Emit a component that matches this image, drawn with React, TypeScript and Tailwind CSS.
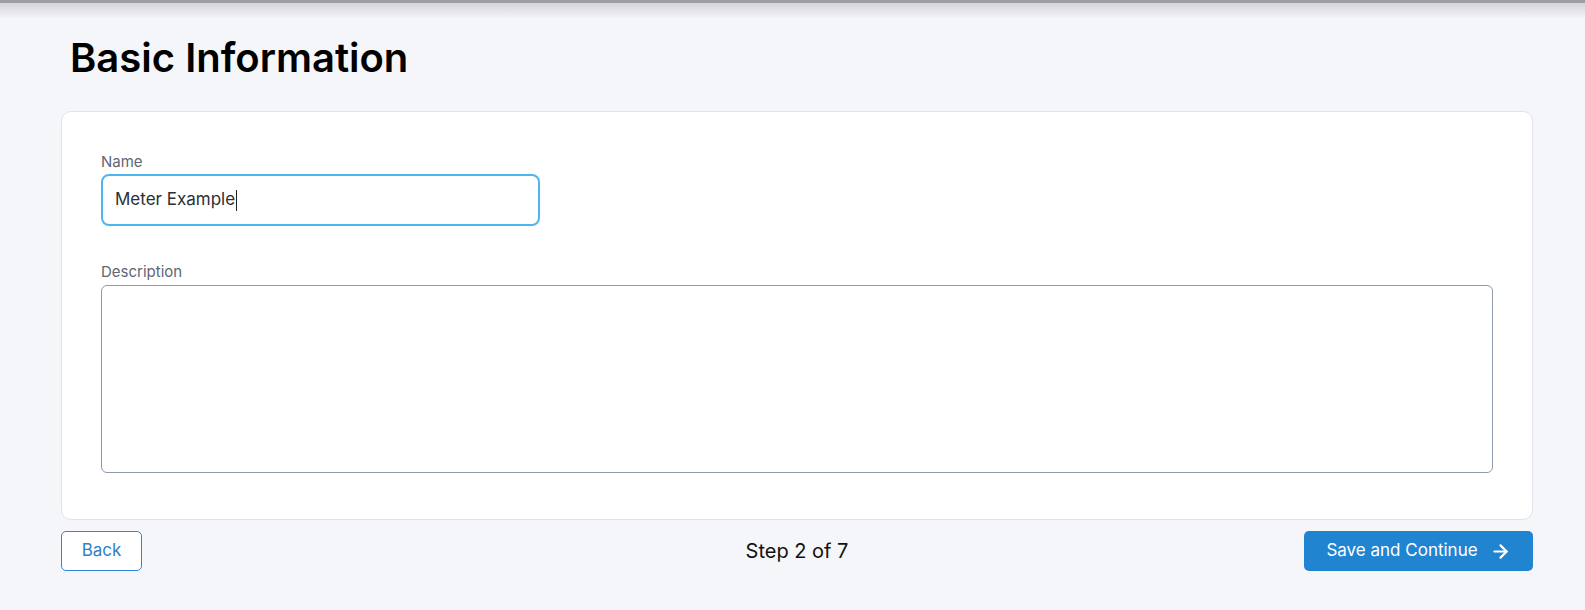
import { ArrowRight } from "lucide-react"

export default function App() {
    return (
        <div
            className="relative min-h-[610px] w-full bg-[#f5f6fa] text-black"
            style={{ fontFamily: "Inter, 'Noto Sans', sans-serif" }}
        >
            {/* top bar shadow */}
            <div className="h-[3px] bg-[#9c9ca2]" />
            <div className="h-[16px] bg-gradient-to-b from-[#d4d4d9] to-[#f5f6fa]" />

            <div className="pl-[61px] pr-[52px]">
                <h1 className="ml-[9px] mt-[15px] text-[40px] font-semibold leading-[48px]">
                    Basic Information
                </h1>

                <div className="mt-[29px] rounded-[10px] border border-[#e1e3e8] bg-white pb-[46px] pl-[39px] pr-[39px] pt-[40px]">
                    <label className="block text-[15px] leading-[20px] text-[#5f6673]">Name</label>
                    <div className="mt-[2px] flex h-[52px] w-[439px] items-center rounded-[8px] border-2 border-[#4db6ef] px-[12px]">
                        <span className="text-[17px] text-[#2b2f36]">Meter Example</span>
                        <span className="ml-[1px] h-[21px] w-px bg-[#222]" />
                    </div>

                    <label className="mt-[36px] block text-[15px] leading-[20px] text-[#5f6673]">Description</label>
                    <textarea className="mt-[3px] block h-[188px] w-full resize-none rounded-[6px] border border-[#8f9aab] px-3 py-2 outline-none" />
                </div>

                <div className="mt-[11px] grid grid-cols-[1fr_auto_1fr] items-center">
                    <button className="h-[40px] w-[81px] justify-self-start rounded-[5px] border border-[#2f86d6] bg-white text-[17px] text-[#2f7fc9]">
                        Back
                    </button>
                    <span className="text-[20px] text-[#111]">Step 2 of 7</span>
                    <button className="flex h-[40px] w-[229px] items-center justify-center gap-[12px] justify-self-end rounded-[5px] bg-[#2184d1] text-[17px] text-white">
                        Save and Continue
                        <ArrowRight className="h-[21px] w-[21px]" strokeWidth={2.5} />
                    </button>
                </div>
            </div>
        </div>
    )
}
